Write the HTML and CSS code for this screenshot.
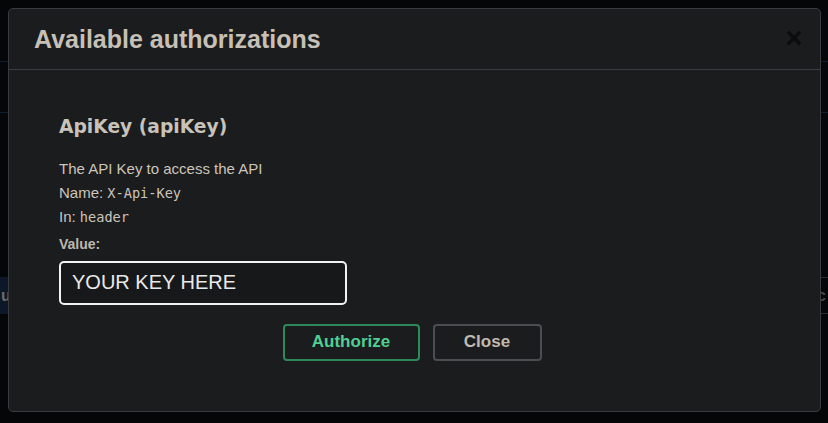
FILE: index.html
```html
<!DOCTYPE html>
<html lang="en">
<head>
<meta charset="utf-8">
<title>Available authorizations</title>
<link rel="stylesheet" href="styles.css">
</head>
<body>
<div class="page">
  <div class="topbar"></div>
  <div class="op-row">
    <div class="op-left">u</div>
    <div class="op-mid"></div>
    <div class="op-right">c</div>
  </div>
</div>

<div class="modal">
  <div class="modal-header">
    <h3 class="modal-title">Available authorizations</h3>
    <button class="close-x" aria-label="Close">
      <svg width="14" height="14" viewBox="0 0 14 14"><path d="M2 2 L12 12 M12 2 L2 12" stroke="#0c0c0d" stroke-width="3.2" stroke-linecap="square"/></svg>
    </button>
  </div>
  <div class="modal-body">
    <h4 class="scheme-title">ApiKey (apiKey)</h4>
    <div class="scheme-info">
      <p>The API Key to access the API</p>
      <p>Name: <code>X-Api-Key</code></p>
      <p>In: <code>header</code></p>
    </div>
    <label class="value-label">Value:</label>
    <div class="value-input">YOUR KEY HERE</div>
    <div class="actions">
      <button class="btn btn-authorize">Authorize</button>
      <button class="btn btn-close">Close</button>
    </div>
  </div>
</div>
</body>
</html>
```

FILE: styles.css
```css
* { box-sizing: border-box; }

html, body {
  margin: 0;
  padding: 0;
  background: #050608;
  width: 828px;
  height: 423px;
  overflow: hidden;
  font-family: "Liberation Sans", Arial, sans-serif;
}

.page {
  position: relative;
  display: flow-root;
  width: 828px;
  height: 423px;
  overflow: hidden;
}

.topbar {
  margin-top: 61px;
  height: 52px;
  border-top: 1px solid #0d1e33;
  border-bottom: 1px solid #0d1e33;
}

.op-row {
  margin-top: 164px;
  height: 37px;
  display: flex;
  align-items: stretch;
}

.op-left {
  width: 12px;
  background: #0c1828;
  color: #6f6b66;
  font-weight: bold;
  font-size: 16px;
  line-height: 37px;
  padding-left: 1px;
  overflow: hidden;
}

.op-mid { flex: 1; }

.op-right {
  width: 12px;
  border-top: 1px solid #2a2b2d;
  border-bottom: 1px solid #2a2b2d;
  color: #4a4846;
  font-weight: bold;
  font-size: 16px;
  line-height: 35px;
  padding-left: 1px;
  overflow: hidden;
}

.modal {
  position: absolute;
  left: 8px;
  top: 8px;
  width: 813px;
  height: 404px;
  background: #1b1c1e;
  border: 1px solid #3a3b3e;
  border-radius: 5px;
  display: flex;
  flex-direction: column;
}

.modal-header {
  height: 61px;
  border-bottom: 1px solid #3c3d40;
  display: flex;
  align-items: center;
  justify-content: space-between;
  padding: 0 18px 0 25px;
  flex-shrink: 0;
}

.modal-title {
  margin: 0;
  font-size: 25px;
  font-weight: bold;
  color: #c6c0b6;
  line-height: 28px;
}

.close-x {
  background: none;
  border: none;
  padding: 0;
  width: 14px;
  height: 14px;
  display: flex;
  margin-top: -3px;
  margin-right: 1px;
}

.modal-body {
  padding: 45px 50px 0 50px;
}

.scheme-title {
  margin: 0;
  font-family: "DejaVu Sans", Verdana, sans-serif;
  font-weight: bold;
  font-size: 18.7px;
  line-height: 24px;
  color: #c8c2b8;
}

.scheme-info {
  margin-top: 18px;
}

.scheme-info p {
  margin: 0;
  font-size: 15px;
  line-height: 23.5px;
  color: #cbc5bb;
}

.scheme-info code {
  font-family: "DejaVu Sans Mono", "Liberation Mono", monospace;
  font-size: 13.6px;
  color: #cbc5bb;
}

.value-label {
  display: block;
  margin-top: 5px;
  font-size: 14px;
  font-weight: bold;
  line-height: 18px;
  color: #bdb7ad;
}

.value-input {
  margin-top: 8px;
  width: 288px;
  height: 44px;
  border: 2px solid #f2f2f2;
  border-radius: 5px;
  background: #17181a;
  color: #e9e9e9;
  font-size: 20px;
  padding-left: 11px;
  display: flex;
  align-items: center;
}

.actions {
  margin-top: 19px;
  display: flex;
  justify-content: center;
  gap: 13px;
  padding-right: 5px;
}

.btn {
  height: 37px;
  border-radius: 4px;
  background: #1b1c1e;
  font-family: "Liberation Sans", Arial, sans-serif;
  font-weight: bold;
  font-size: 17px;
  padding: 0;
  display: flex;
  align-items: center;
  justify-content: center;
}

.btn-authorize {
  width: 137px;
  border: 2px solid #2c8a5b;
  color: #4fcf93;
}

.btn-close {
  width: 109px;
  border: 2px solid #4b4d50;
  color: #c0bab0;
}
```
